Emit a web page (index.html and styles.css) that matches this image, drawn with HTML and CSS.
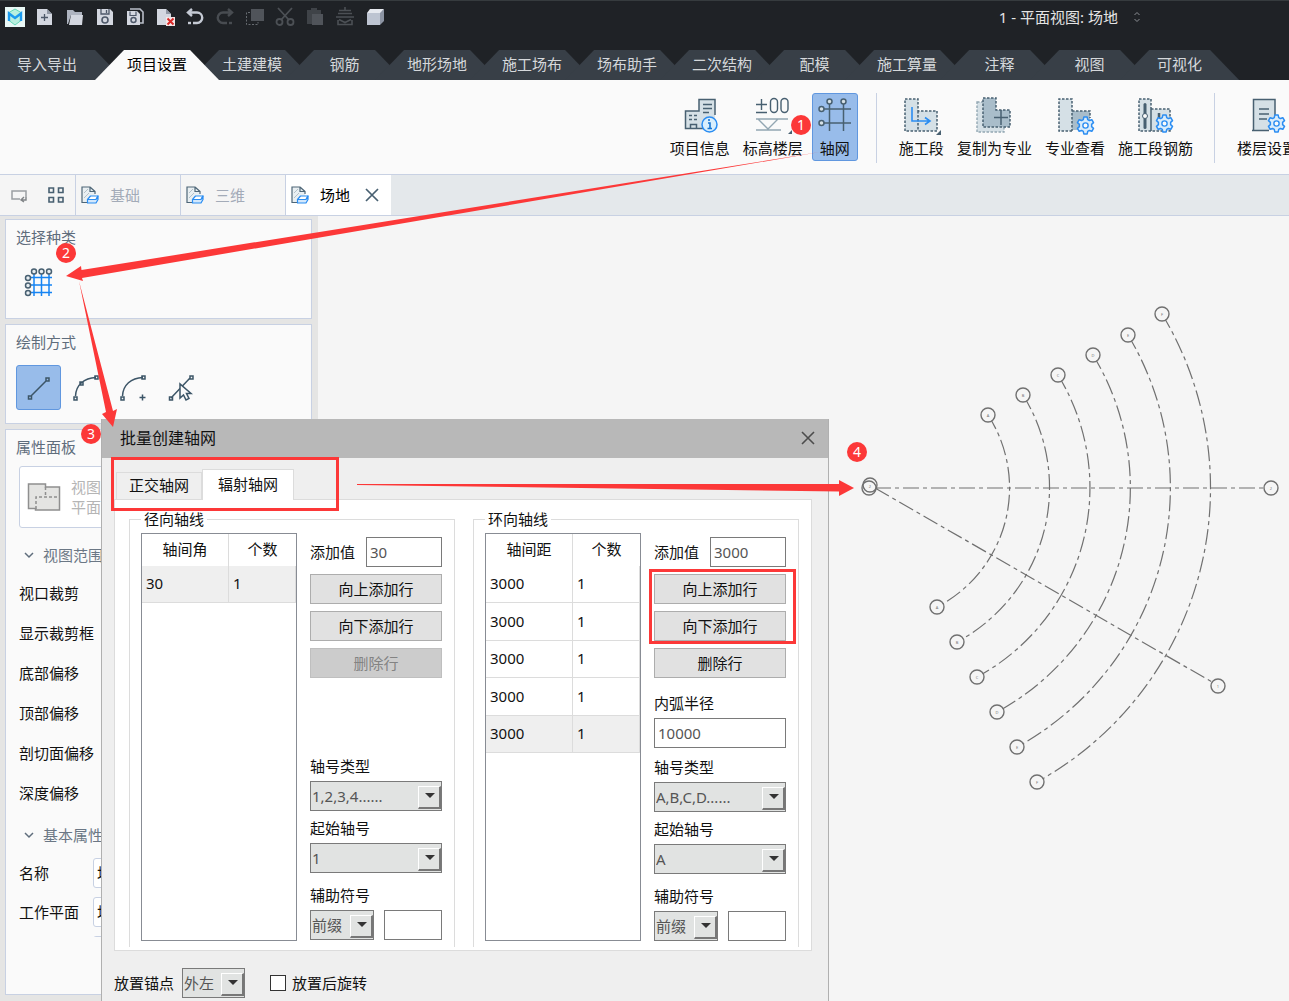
FILE: index.html
```html
<!DOCTYPE html>
<html lang="zh-CN">
<head>
<meta charset="utf-8">
<title>批量创建轴网</title>
<link rel="stylesheet" href="styles.css">
</head>
<body>
<svg width="0" height="0" class="defs" aria-hidden="true">
  <defs>
    <symbol id="gear" viewBox="0 0 18 18">
      <path d="M7.4 1h3.2l.5 2.4 1.6.9 2.3-.8 1.6 2.8-1.8 1.6v2.2l1.8 1.6-1.6 2.8-2.3-.8-1.6.9-.5 2.4H7.4l-.5-2.4-1.6-.9-2.3.8-1.6-2.8 1.8-1.6V7.900l-1.800-1.600L3 3.500l2.300.8 1.600-.9z" fill="#d9ecfb" stroke="#2b8df2" stroke-width="1.400" stroke-linejoin="round"/>
      <circle cx="9" cy="9" r="2.500" fill="#fafafa" stroke="#2b8df2" stroke-width="1.300"/>
    </symbol>
    <symbol id="doc" viewBox="0 0 20 20">
      <path d="M2 2h8l5 5v11H2z" fill="#e9eff2"/>
      <path d="M4 8l4-4M4 13l5-5" stroke="#b3c0c8" fill="none"/>
      <path d="M7 17.500H2V2h8v4.500h5V9M10 2l5 4.500" fill="none" stroke="#4e6677" stroke-width="1.200"/>
      <path d="M7.500 14.500l3-3.500h7.500l-2 3.500z" fill="#fff" stroke="#2b8df2" stroke-width="1.200" stroke-linejoin="round"/>
      <path d="M7.500 14.500H16l2-3.500v3.500l-2 3.500H7.500z" fill="#d3e8fc" stroke="#2b8df2" stroke-width="1.200" stroke-linejoin="round"/>
    </symbol>
  </defs>
</svg>

<header class="titlebar">
  <div class="quick">
    <svg viewBox="0 0 20 20"><path d="M0 0h20v20H0z" fill="#e9f8f6"/><path d="M10 2l6 3.500v8L10 18l-6-4.500v-8z" fill="#b8f0df" stroke="#64d9b8"/><path d="M4 14V6.500l6 4.500 6-4.500V14" fill="none" stroke="#1b9bf0" stroke-width="2.400"/></svg>
    <svg viewBox="0 0 20 20"><path d="M2 2h10l5 5v11H2z" fill="#d3d7e0"/><path d="M12 2v5h5" fill="#9299a6"/><path d="M9.500 7v7M6 10.500h7" stroke="#4d5869" stroke-width="1.300"/></svg>
    <svg viewBox="0 0 20 20"><path d="M2 3h6l2 2h7v3H6L3 17H2z" fill="#aeb4c0"/><path d="M6 8h12l-1 10H4z" fill="#d3d7e0"/></svg>
    <svg viewBox="0 0 20 20"><path d="M2 2h13l3 3v13H2z" fill="#d3d7e0"/><path d="M6 2v5h8V2M11.500 3v3" fill="none" stroke="#4d5869" stroke-width="1.300"/><circle cx="10" cy="13" r="3" fill="none" stroke="#4d5869" stroke-width="1.600"/></svg>
    <svg viewBox="0 0 20 20"><path d="M5 2h10l3 3v11h-3" fill="none" stroke="#b9bec9" stroke-width="1.600"/><path d="M2 4h10l3 3v11H2z" fill="#d3d7e0"/><path d="M5 4.500v4h6v-4" fill="none" stroke="#4d5869" stroke-width="1.200"/><circle cx="8.500" cy="13" r="2.500" fill="none" stroke="#4d5869" stroke-width="1.500"/></svg>
    <svg viewBox="0 0 20 20"><path d="M2 2h9l5 5v11H2z" fill="#d3d7e0"/><path d="M11 2v5h5" fill="#9299a6"/><path d="M11 10h9v9h-9z" fill="#f2e6e6"/><path d="M12.500 11.500l6 6M18.500 11.500l-6 6" stroke="#d82727" stroke-width="1.900"/></svg>
    <svg viewBox="0 0 20 20" fill="none" stroke="#c5cad4" stroke-width="2.400"><path d="M7 2L3 5.500 7 9M3 5.500h9a5 5 0 0 1 0 10.500H8"/><path d="M3 16h3"/></svg>
    <svg viewBox="0 0 20 20" fill="none" stroke="#484c51" stroke-width="2.400"><path d="M13 2l4 3.500L13 9M17 5.500H8A5 5 0 0 0 8 16h4"/><path d="M14 16h3"/></svg>
    <svg viewBox="0 0 20 20"><path d="M6 2h13v12H6z" fill="#50545a"/><path d="M5 5.500H1.500v12H13V15" fill="none" stroke="#666b70" stroke-dasharray="2 1.500"/></svg>
    <svg viewBox="0 0 20 20" fill="none" stroke="#4c5055" stroke-width="1.800"><path d="M3 1l11 12M17 1L6 13"/><circle cx="4.500" cy="15" r="3"/><circle cx="15.500" cy="15" r="3"/></svg>
    <svg viewBox="0 0 20 20"><path d="M2 3h14v4H7v10H2zM6 1h6v3H6z" fill="#3f4348"/><path d="M7 7h11v11H7z" fill="#50545a"/></svg>
    <svg viewBox="0 0 20 20" fill="none" stroke="#4c5055" stroke-width="1.600"><path d="M10 0v4M4 3.500h12M3 6.500h14M1 10h18M4 12.500l6 3 6-3M3 13v4.500h14V13"/></svg>
    <svg viewBox="0 0 20 20"><path d="M2 6l3-4h14l-3 4z" fill="#e6e9ef"/><path d="M2 6h13v12H2z" fill="#bdc4d1"/><path d="M15 6l4-4v12l-4 4z" fill="#8c94a3"/></svg>
  </div>
  <div class="view-title">
    <span>1 - 平面视图: 场地</span>
    <svg viewBox="0 0 8 12"><path d="M1.500 4L4 1.500 6.500 4M1.500 8L4 10.500 6.500 8" fill="none" stroke="#8b8f94"/></svg>
  </div>
</header>

<nav class="tabs">
  <a href="#" class="first">导入导出</a>
  <a href="#" class="current">项目设置</a>
  <a href="#">土建建模</a>
  <a href="#">钢筋</a>
  <a href="#">地形场地</a>
  <a href="#">施工场布</a>
  <a href="#">场布助手</a>
  <a href="#">二次结构</a>
  <a href="#">配模</a>
  <a href="#">施工算量</a>
  <a href="#">注释</a>
  <a href="#">视图</a>
  <a href="#">可视化</a>
</nav>

<div class="ribbon">
  <div class="group">
    <button type="button"><svg viewBox="0 0 36 36"><path d="M3 14h14V2h16v30H3z" fill="#d5e0e6"/><path d="M22 31.500H3.500V14H17V2.500h16V18M21 7.500h9M21 11.500h9M21 15.500h6M7 18.500h3M12 18.500h3M7 22.500h3M12 22.500h3M8.500 31v-3.500h6V31" fill="none" stroke="#486071" stroke-width="1.500"/><circle cx="27.500" cy="27.500" r="7.500" fill="#d9effd" stroke="#2b8df2" stroke-width="1.500"/><path d="M26 26h2v5M25.500 31.500h4.500M27 22v2" fill="none" stroke="#1976d2" stroke-width="1.600"/></svg><span>项目信息</span></button>
    <button type="button"><svg viewBox="0 0 36 36"><path d="M1 7.500h11M6.500 2v11M1 15.500h11" fill="none" stroke="#486071" stroke-width="1.400"/><rect x="15.500" y="1.500" width="7" height="14" rx="3.500" fill="none" stroke="#486071" stroke-width="1.400"/><rect x="26" y="1.500" width="7" height="14" rx="3.500" fill="none" stroke="#486071" stroke-width="1.400"/><path d="M1 22h32M1 33h25M3 22l10 10 10-10" fill="none" stroke="#93a7b3" stroke-width="1.400"/><path d="M37 33v4h-4z" fill="#486071"/></svg><span>标高楼层</span></button>
    <button type="button" class="on"><svg viewBox="0 0 36 36" fill="none" stroke="#486071" stroke-width="1.500"><path d="M5 12h29M5 26h29M12.500 6v28M26.500 6v28"/><circle cx="12.500" cy="4.500" r="2.500" fill="#d5e0e6"/><circle cx="26.500" cy="4.500" r="2.500" fill="#d5e0e6"/><circle cx="4.500" cy="12" r="2.500" fill="#d5e0e6"/><circle cx="4.500" cy="26" r="2.500" fill="#d5e0e6"/></svg><span>轴网</span></button>
  </div>
  <i class="rule"></i>
  <button type="button"><svg viewBox="0 0 36 36"><path d="M2 2h13v12h19v20H2zM15 14v20" fill="#d5e0e6" stroke="#486071" stroke-width="1.500" stroke-dasharray="2.500 1.500"/><path d="M9 10v14h17M22 20.500l5 3.500-5 3.500" fill="none" stroke="#2b8df2" stroke-width="1.600"/><path d="M38 33v5h-5z" fill="#486071"/></svg><span>施工段</span></button>
  <button type="button"><svg viewBox="0 0 36 36"><path d="M1 5h13v12h14v18H1z" fill="#d5e0e6" stroke="#93a7b3" stroke-width="1.400" stroke-dasharray="2.500 1.500"/><path d="M7 1h13v12h14v17H7z" fill="#a9bdca" stroke="#486071" stroke-width="1.500" stroke-dasharray="2.500 1.500"/><path d="M25 13v15M18 20.500h14" stroke="#486071" stroke-width="1.500"/></svg><span>复制为专业</span></button>
  <button type="button"><svg viewBox="0 0 36 36"><path d="M15 14h18v19H15z" fill="#a9bdca"/><path d="M2 2h13v32H2z" fill="#d5e0e6"/><path d="M15 34H2V2h13v32M15 14h18v7" fill="none" stroke="#486071" stroke-width="1.500" stroke-dasharray="2.500 1.500"/><use href="#gear" x="19" y="19" width="19" height="19"/></svg><span>专业查看</span></button>
  <button type="button"><svg viewBox="0 0 36 36"><path d="M2 2h12v32H2zM14 12h19v22H14z" fill="#d5e0e6" stroke="#486071" stroke-width="1.500" stroke-dasharray="2.500 1.500"/><rect x="6.500" y="6" width="3" height="26" rx="1.500" fill="#486071"/><circle cx="8" cy="19" r="2.500" fill="#fafafa" stroke="#486071"/><path d="M22 16v6" stroke="#486071" stroke-width="2.500"/><use href="#gear" x="18" y="17" width="19" height="19"/></svg><span>施工段钢筋</span></button>
  <i class="rule"></i>
  <button type="button"><svg viewBox="0 0 36 36"><path d="M4 2h22v31H4z" fill="#d5e0e6"/><path d="M20 33.500H3M4.500 33V2.500H26V18M10 12h10M10 17h10M10 22h8" fill="none" stroke="#486071" stroke-width="1.500"/><use href="#gear" x="18" y="17" width="19" height="19"/></svg><span>楼层设置</span></button>
</div>

<div class="docs">
  <div class="doc-tools">
    <svg viewBox="0 0 18 18"><path d="M10 13H2V5h14v6" fill="none" stroke="#9b9fa3" stroke-width="1.500"/><path d="M16 11v3h-4M14 11l-3 3 3 2" fill="none" stroke="#7f8386" stroke-width="1.400"/></svg>
    <svg viewBox="0 0 18 18" fill="none" stroke="#486071" stroke-width="1.600"><path d="M2 2h4.500v4.500H2zM11.500 2H16v4.500h-4.500zM2 11.500h4.500V16H2zM11.500 11.500H16V16h-4.500z"/></svg>
  </div>
  <a href="#"><svg viewBox="0 0 20 20"><use href="#doc"/></svg>基础</a>
  <a href="#"><svg viewBox="0 0 20 20"><use href="#doc"/></svg>三维</a>
  <a href="#" class="current"><svg viewBox="0 0 20 20"><use href="#doc"/></svg>场地<svg class="x" viewBox="0 0 14 14"><path d="M1 1l12 12M13 1L1 13" stroke="#486071" stroke-width="1.700"/></svg></a>
</div>

<main class="work">
  <aside class="side">
    <section class="panel">
      <h2>选择种类</h2>
      <div class="tools">
        <button type="button" aria-label="轴网"><svg viewBox="0 0 30 30"><path d="M7 9.500h21M7 17h21M7 24.500h21M10 6v22M17.500 6v22M25 6v22" stroke="#1684f3" stroke-width="1.500"/><g fill="#e8eef2" stroke="#486071" stroke-width="1.500"><circle cx="10" cy="3.500" r="2.500"/><circle cx="17.500" cy="3.500" r="2.500"/><circle cx="25" cy="3.500" r="2.500"/><circle cx="4" cy="10" r="2.500"/><circle cx="4" cy="17.500" r="2.500"/><circle cx="4" cy="25" r="2.500"/></g></svg></button>
      </div>
    </section>
    <section class="panel">
      <h2>绘制方式</h2>
      <div class="tools">
        <button type="button" class="on" aria-label="直线"><svg viewBox="0 0 30 30" fill="none" stroke="#3c5567" stroke-width="1.500"><path d="M7 23L22 8M4.500 23h3v3h-3zM22 5h3v3h-3z"/></svg></button>
        <button type="button" aria-label="三点弧"><svg viewBox="0 0 30 30" fill="none" stroke="#3c5567" stroke-width="1.500"><path d="M3.500 23C4 12 12 5 24 4.500M2 24h3v3H2zM8 9h3v3H8zM23 3h3v3h-3z"/></svg></button>
        <button type="button" aria-label="圆心弧"><svg viewBox="0 0 30 30" fill="none" stroke="#3c5567" stroke-width="1.500"><path d="M2.500 23C3 12 11 5 23 4.500M1 24h3v3H1zM22 3h3v3h-3zM19.500 24.500h6M22.500 21.500v6"/></svg></button>
        <button type="button" aria-label="拾取线"><svg viewBox="0 0 30 30" fill="none" stroke="#3c5567" stroke-width="1.500"><path d="M3 25L22 5M1.500 24h3v3h-3zM22 3h3v3h-3z"/><path d="M12 11v14l3.500-3 2.500 5 3-1.500-2.500-5H23z" fill="#fafafa"/></svg></button>
      </div>
    </section>
    <section class="panel grow">
      <h2>属性面板</h2>
      <div class="kind">
        <svg viewBox="0 0 34 30"><path d="M1.500 2h17v3h14v23h-24v-1.500h-7z" fill="#e4e4e2" stroke="#8f8f8f" stroke-width="1.500"/><path d="M9 27V15h23M18.500 5v10" fill="none" stroke="#8f8f8f" stroke-width="1.500" stroke-dasharray="3 2"/></svg>
        <div>视图<br>平面</div>
      </div>
      <h3><svg viewBox="0 0 10 8"><path d="M1 2l4 4 4-4" fill="none" stroke="#5f6d7c" stroke-width="1.500"/></svg>视图范围</h3>
      <ul>
        <li>视口裁剪</li><li>显示裁剪框</li><li>底部偏移</li><li>顶部偏移</li><li>剖切面偏移</li><li>深度偏移</li>
      </ul>
      <h3><svg viewBox="0 0 10 8"><path d="M1 2l4 4 4-4" fill="none" stroke="#5f6d7c" stroke-width="1.500"/></svg>基本属性</h3>
      <div class="attrs">
        <label for="a1">名称</label><input id="a1" value="场地">
        <label for="a2">工作平面</label><input id="a2" value="场地">
        <span></span><input aria-label="其他">
      </div>
    </section>
  </aside>

  <section class="canvas">
    <svg class="drawing">
      <g transform="translate(-318 -216)">
        <g class="axis">
          <path d="M875 488H1265M875 488L1212 682"/>
          <path d="M988 415A134 134 0 0 1 937 607"/>
          <path d="M1023 395A175 175 0 0 1 957 642"/>
          <path d="M1058 375A215 215 0 0 1 977 677"/>
          <path d="M1093 355A255 255 0 0 1 997 712"/>
          <path d="M1128 335A296 296 0 0 1 1017 747"/>
          <path d="M1162 314A336 336 0 0 1 1037 782"/>
        </g>
        <g class="bubble">
          <circle cx="988" cy="415" r="7"/><circle cx="1023" cy="395" r="7"/><circle cx="1058" cy="375" r="7"/><circle cx="1093" cy="355" r="7"/><circle cx="1128" cy="335" r="7"/><circle cx="1162" cy="314" r="7"/>
          <circle cx="937" cy="607" r="7"/><circle cx="957" cy="642" r="7"/><circle cx="977" cy="677" r="7"/><circle cx="997" cy="712" r="7"/><circle cx="1017" cy="747" r="7"/><circle cx="1037" cy="782" r="7"/>
          <circle cx="1271" cy="488" r="7"/><circle cx="1218" cy="686" r="7"/><circle cx="870" cy="485" r="7"/><circle cx="869" cy="488" r="7" fill="none"/>
        </g>
        <g class="mark">
          <text x="988" y="417">A</text><text x="1023" y="397">B</text><text x="1058" y="377">C</text><text x="1093" y="357">D</text><text x="1128" y="337">E</text><text x="1162" y="316">F</text>
          <text x="937" y="609">A</text><text x="957" y="644">B</text><text x="977" y="679">C</text><text x="997" y="714">D</text><text x="1017" y="749">E</text><text x="1037" y="784">F</text>
          <text x="1271" y="490">2</text><text x="1218" y="688">1</text><text x="870" y="488">2</text>
        </g>
      </g>
    </svg>
  </section>
</main>

<div class="dialog" role="dialog" aria-labelledby="dt">
  <div class="dialog-title">
    <h1 id="dt">批量创建轴网</h1>
    <button type="button" aria-label="关闭"><svg viewBox="0 0 12 12"><path d="M0 0l12 12M12 0L0 12" stroke="#4c4c4c" stroke-width="1.600"/></svg></button>
  </div>
  <div class="dialog-body">
    <div class="dtabs"><button type="button">正交轴网</button><button type="button" class="current">辐射轴网</button></div>
    <div class="pane">
      <fieldset>
        <legend>径向轴线</legend>
        <div class="cols">
          <div class="grid">
            <table>
              <thead><tr><th>轴间角</th><th>个数</th></tr></thead>
              <tbody><tr class="sel"><td>30</td><td>1</td></tr></tbody>
            </table>
          </div>
          <div class="ctl">
            <div class="add"><label for="v1">添加值</label><input id="v1" value="30"></div>
            <button type="button">向上添加行</button>
            <button type="button">向下添加行</button>
            <button type="button" disabled>删除行</button>
            <div class="field type"><label for="t1">轴号类型</label><span class="sel-box"><select id="t1"><option>1,2,3,4......</option></select></span></div>
            <div class="field start"><label for="s1">起始轴号</label><span class="sel-box"><select id="s1"><option>1</option></select></span></div>
            <div class="field affix"><label for="p1">辅助符号</label><div class="pair"><span class="sel-box"><select id="p1"><option>前缀</option></select></span><input aria-label="符号"></div></div>
          </div>
        </div>
      </fieldset>
      <fieldset>
        <legend>环向轴线</legend>
        <div class="cols">
          <div class="grid">
            <table>
              <thead><tr><th>轴间距</th><th>个数</th></tr></thead>
              <tbody>
                <tr><td>3000</td><td>1</td></tr>
                <tr><td>3000</td><td>1</td></tr>
                <tr><td>3000</td><td>1</td></tr>
                <tr><td>3000</td><td>1</td></tr>
                <tr class="sel"><td>3000</td><td>1</td></tr>
              </tbody>
            </table>
          </div>
          <div class="ctl">
            <div class="add"><label for="v2">添加值</label><input id="v2" value="3000"></div>
            <button type="button">向上添加行</button>
            <button type="button">向下添加行</button>
            <button type="button">删除行</button>
            <div class="field radius"><label for="r2">内弧半径</label><input id="r2" value="10000"></div>
            <div class="field type"><label for="t2">轴号类型</label><span class="sel-box"><select id="t2"><option>A,B,C,D......</option></select></span></div>
            <div class="field start"><label for="s2">起始轴号</label><span class="sel-box"><select id="s2"><option>A</option></select></span></div>
            <div class="field affix"><label for="p2">辅助符号</label><div class="pair"><span class="sel-box"><select id="p2"><option>前缀</option></select></span><input aria-label="符号"></div></div>
          </div>
        </div>
      </fieldset>
    </div>
    <div class="foot">
      <label for="anchor">放置锚点</label>
      <span class="sel-box"><select id="anchor"><option>外左</option></select></span>
      <label class="check"><input type="checkbox">放置后旋转</label>
    </div>
  </div>
</div>

<svg class="notes">
  <g fill="#fc3838">
    <path d="M820 152L82 278l1 3-17-5 15-10 .500 4z"/>
    <path d="M79 281L113 411l4-2-4 18-11-13 4-2z"/>
    <path d="M357 484h482v-4l15 8-15 8v-4.500L357 485z"/>
    <circle cx="801" cy="125" r="10"/><circle cx="66" cy="253" r="10"/><circle cx="91" cy="434" r="10"/><circle cx="857" cy="452" r="10"/>
  </g>
  <g fill="none" stroke="#fc3838" stroke-width="3">
    <rect x="112.500" y="458.500" width="225" height="51"/>
    <rect x="650.500" y="570.500" width="144" height="72"/>
  </g>
  <g class="num"><text x="801" y="130">1</text><text x="66" y="258">2</text><text x="91" y="439">3</text><text x="857" y="457">4</text></g>
</svg>
</body>
</html>
```
FILE: styles.css
```css
* { box-sizing: border-box; }
body {
  margin: 0;
  position: relative;
  display: flex;
  flex-direction: column;
  min-height: 100vh;
  overflow: hidden;
  background: #f5f5f5;
  color: #111;
  font: 15px/20px "Noto Sans", "Noto Sans CJK SC", sans-serif;
}
button, input, select { font: inherit; color: inherit; margin: 0; }
button { padding: 0; border: 0; background: none; }
a { color: inherit; text-decoration: none; }
h1, h2, h3, ul { margin: 0; padding: 0; font-weight: 400; font-size: 15px; list-style: none; }
svg { display: block; flex: none; overflow: visible; }
.defs { position: absolute; }

.titlebar {
  display: flex;
  justify-content: space-between;
  height: 50px;
  padding: 6px 148px 0 5px;
  border-top: 1px solid #363b3e;
  background: #1f2226;
}
.quick { display: flex; gap: 10px; }
.quick svg { width: 20px; height: 20px; }
.view-title { display: flex; gap: 15px; height: 20px; align-items: center; color: #e4e4e4; }
.view-title svg { width: 8px; height: 12px; }

.tabs { display: flex; height: 30px; background: #1f2226; color: #d5d8db; }
.tabs a {
  flex: none;
  min-width: 119px;
  margin-left: -29px;
  padding: 4px 32px 6px;
  text-align: center;
  background: #383f47;
  clip-path: polygon(29px 0, calc(100% - 29px) 0, 100% 100%, 0 100%);
}
.tabs .first { margin-left: 0; padding: 4px 47px 6px 17px; clip-path: polygon(0 0, calc(100% - 29px) 0, 100% 100%, 0 100%); }
.tabs .current { position: relative; z-index: 1; background: #fafafa; color: #000; }

.ribbon {
  display: flex;
  align-items: flex-start;
  gap: 1px;
  height: 95px;
  padding: 13px 0 0 51.5%;
  border-bottom: 1px solid #c8d1e3;
  background: #fafafa;
  overflow: hidden;
}
.group { flex: none; display: flex; gap: 1px; margin-right: 3px; }
.ribbon button {
  flex: none;
  display: flex;
  flex-direction: column;
  align-items: center;
  gap: 5px;
  height: 68px;
  padding: 3px 5px 2px;
  border: 1px solid transparent;
  border-radius: 3px;
}
.ribbon button span { white-space: nowrap; }
.ribbon svg { width: 36px; height: 36px; }
.ribbon .on { margin-left: 2px; padding: 3px 4px 2px; }
.ribbon .on, .tools .on { background: #98bcea; border: 1px solid #6097df; }
.rule { flex: none; width: 1px; height: 70px; margin: 0 15px 0 14px; background: #c8d1e3; }

.docs { display: flex; height: 41px; border-bottom: 1px solid #c8d1e3; background: #e4e8eb; color: #a3abb8; }
.docs > * { display: flex; align-items: center; height: 40px; border-right: 1px solid #c8d1e3; background: #f5f5f5; }
.doc-tools { gap: 19px; width: 76px; padding-left: 10px; }
.doc-tools svg { width: 18px; height: 18px; }
.docs a { width: 105px; gap: 10px; padding-left: 4px; }
.docs a svg { width: 20px; height: 20px; }
.docs .current { background: #fff; color: #000; border-right: 0; }
.docs a .x { width: 14px; height: 14px; margin-left: 5px; }

.work { display: flex; flex: 1; }
.side {
  display: flex;
  flex-direction: column;
  gap: 5px;
  width: 318px;
  flex: none;
  padding: 3px 6px 6px 5px;
  background: #e5e5e4;
}
.panel { height: 100px; padding: 7px 10px; border: 1px solid #c8d1e3; background: #fafafa; }
.grow { flex: 1; }
.panel h2 { color: #5f6d7c; }
.tools { display: flex; gap: 3px; margin-top: 13px; }
.tools button { width: 45px; height: 45px; display: grid; place-items: center; border: 1px solid transparent; border-radius: 3px; }
.tools svg { width: 30px; height: 30px; }
.kind {
  display: flex;
  align-items: center;
  gap: 10px;
  height: 62px;
  margin: 9px 0 17px 3px;
  padding-left: 7px;
  border: 1px solid #c8d1e3;
  border-radius: 3px;
  background: #fff;
  color: #b5b5b5;
}
.kind svg { width: 34px; height: 30px; }
.panel h3 { display: flex; align-items: center; gap: 9px; margin: 12px 0 8px; padding-left: 8px; color: #6b7785; }
.panel h3 svg { width: 10px; height: 8px; }
.panel li { padding: 10px 0 10px 3px; }
.attrs {
  display: grid;
  grid-template-columns: 70px 1fr;
  grid-auto-rows: 39px;
  align-items: center;
  gap: 0 4px;
  height: 84px;
  padding-left: 3px;
  overflow: hidden;
}
.attrs input { width: 100%; height: 30px; padding: 0 3px; border: 1px solid #c8d1e3; border-radius: 3px; background: #fff; }

.canvas { flex: 1; position: relative; background: #f5f5f5; overflow: hidden; }
.drawing { position: absolute; inset: 0; width: 100%; height: 100%; }
.axis { fill: none; stroke: #707070; stroke-width: 1.2; stroke-dasharray: 16 4 4 4; }
.bubble { fill: #f5f5f5; stroke: #707070; stroke-width: 1.4; }
.mark { font-size: 4px; fill: #777; text-anchor: middle; }

.dialog { position: absolute; left: 101px; top: 419px; width: 728px; border: 1px solid #b0b0b0; border-bottom: 0; border-top: 0; background: #efefef; }
.dialog-title { display: flex; justify-content: space-between; align-items: center; height: 39px; padding: 0 14px 1px 18px; background: #b8b8b8; }
.dialog-title h1 { font-size: 16px; color: #111; }
.dialog-title svg { width: 12px; height: 12px; }
.dialog-body { padding: 11px 16px 4px 12px; }
.dtabs { display: flex; align-items: flex-end; height: 31px; padding-left: 2px; }
.dtabs button { width: 86px; height: 28px; padding-bottom: 2px; border: 1px solid #dcdcdc; background: #efefef; }
.dtabs .current { position: relative; width: 92px; height: 31px; border-bottom: 0; background: #fff; }
.pane { display: flex; justify-content: space-between; margin-top: -1px; padding: 9px 12px 3px 14px; border: 1px solid #dcdcdc; background: #fff; }
fieldset { min-width: 0; width: 326px; margin: 0; padding: 4px 12px 5px 11px; border: 1px solid #dcdcdc; border-bottom: 0; }
legend { padding: 0 3px; }
.cols { display: flex; justify-content: space-between; }
.grid { width: 156px; height: 408px; border: 1px solid #888c94; background: #fff; }
table { width: 154px; table-layout: fixed; border-collapse: separate; border-spacing: 0; }
th, td { padding: 0 0 2px; font-weight: 400; border-right: 1px solid #dcdcdc; }
th { height: 32px; }
th:first-child { width: 87px; }
th:last-child { border-right: 0; }
td { height: 37px; padding-left: 4px; border-bottom: 1px solid #dcdcdc; }
tr:nth-child(even) td { height: 38px; }
.sel td { background: #efefef; }
.ctl { display: flex; flex-direction: column; width: 132px; padding: 4px 0 1px; gap: 7px; }
.add { display: flex; justify-content: space-between; align-items: center; }
.add input { width: 76px; }
.ctl input { height: 30px; padding: 0 3px; border: 1px solid #7a7a7a; background: #fff; color: #555; }
.ctl > button { height: 30px; border: 1px solid #adadad; background: #e1e1e1; }
.ctl > button:disabled { background: #ccc; border-color: #bfbfbf; color: #838383; }
.field { display: flex; flex-direction: column; gap: 3px; }
.field label { line-height: 24px; }
.radius { margin-top: 6px; }
.type { margin-top: auto; }
.start { margin-top: -2px; }
.affix { margin-top: 3px; }
.pair { display: flex; justify-content: space-between; }
.pair .sel-box { width: 64px; }
.pair input { width: 58px; }
.sel-box { position: relative; display: block; }
.sel-box::before {
  content: "";
  position: absolute;
  right: 1px;
  top: 5px;
  width: 20px;
  height: 20px;
  border: 1px solid #fff;
  border-right: 2px solid #777;
  border-bottom: 2px solid #777;
  background: #e1e3e2;
  pointer-events: none;
}
.sel-box::after {
  content: "";
  position: absolute;
  right: 7px;
  top: 12px;
  border: 5px solid transparent;
  border-top-color: #333;
  border-bottom: 0;
  pointer-events: none;
}
select { appearance: none; display: block; width: 100%; height: 30px; padding: 0 0 0 1px; border: 1px solid #7a7a7a; border-radius: 0; background: #e1e3e2; color: #555; }
.foot { display: flex; align-items: center; margin-top: 17px; }
.foot .sel-box { width: 63px; margin: 0 25px 0 8px; }
.check { display: flex; align-items: center; gap: 6px; }
.check input { appearance: none; width: 16px; height: 16px; border: 1px solid #333; background: #fff; }

.notes { position: absolute; inset: 0; width: 100%; height: 100%; pointer-events: none; }
.num { font-size: 14px; fill: #fff; text-anchor: middle; }
```
